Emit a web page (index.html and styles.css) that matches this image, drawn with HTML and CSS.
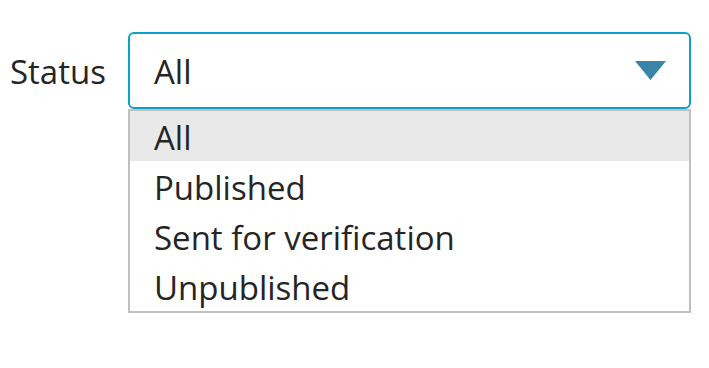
FILE: index.html
```html
<!DOCTYPE html>
<html>
<head>
<meta charset="utf-8">
<link rel="stylesheet" href="styles.css">
</head>
<body>
<div class="field">
  <label class="label">Status</label>
  <div class="select">
    <div class="control">
      <span class="value">All</span>
      <svg class="caret" width="31" height="19" viewBox="0 0 31 19"><polygon points="0,0 31,0 15.5,19" fill="#3a84a8"/></svg>
    </div>
    <ul class="menu">
      <li class="option active">All</li>
      <li class="option">Published</li>
      <li class="option">Sent for verification</li>
      <li class="option">Unpublished</li>
    </ul>
  </div>
</div>
</body>
</html>
```
FILE: styles.css
```css
html, body {
  margin: 0;
  padding: 0;
  background: #fff;
}
body {
  font-family: "Open Sans", "Liberation Sans", sans-serif;
  font-size: 33px;
  color: #252525;
}
.field {
  display: flex;
  align-items: flex-start;
  padding: 32px 0 0 10px;
  gap: 23px;
}
.label {
  line-height: 76px;
  padding-top: 2px;
  width: 95px;
  white-space: nowrap;
}
.select {
  width: 563px;
}
.control {
  box-sizing: border-box;
  height: 77px;
  border: 2px solid #0aa0c8;
  border-radius: 6px;
  display: flex;
  align-items: center;
  justify-content: space-between;
  padding: 2px 23px 0 24px;
}
.value {
  line-height: 1;
}
.caret {
  display: block;
  margin-top: -3px;
}
.menu {
  list-style: none;
  margin: 0;
  padding: 0;
  border: 2px solid #c0c0c0;
}
.option {
  box-sizing: border-box;
  height: 50px;
  line-height: 50px;
  padding: 2px 0 0 24px;
  white-space: nowrap;
}
.option.active {
  background: #e9e9e9;
}
```
